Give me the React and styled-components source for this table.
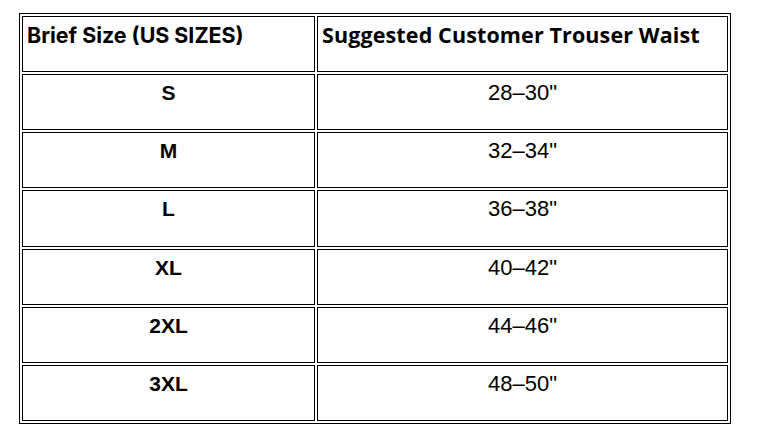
import styled, { createGlobalStyle } from "styled-components";

const GlobalStyle = createGlobalStyle`
  html, body {
    margin: 0;
    padding: 0;
    background: #ffffff;
  }
`;

const SizeTable = styled.table`
  margin: 13px 0 0 19px;
  width: 712px;
  border: 1px solid #000;
  border-collapse: separate;
  border-spacing: 2px;
  table-layout: fixed;
  color: #000;
`;

const Row = styled.tr`
  height: 56.14px;
`;

const HeadCell = styled.th`
  border: 1px solid #000;
  padding: 5px 4px 4px;
  vertical-align: top;
  text-align: left;
  font-family: ${(p) => (p.$alt ? '"Open Sans", "Liberation Sans", sans-serif' : 'Inter, "Liberation Sans", sans-serif')};
  font-weight: 700;
  font-size: ${(p) => (p.$alt ? "21.5px" : "21.4px")};
  letter-spacing: ${(p) => (p.$alt ? "0.12px" : "0")};
  line-height: 26px;
  white-space: nowrap;
`;

const Cell = styled.td`
  border: 1px solid #000;
  padding: 4px 4px;
  vertical-align: top;
  text-align: center;
  font-family: "Liberation Sans", Arial, sans-serif;
  font-weight: ${(p) => (p.$bold ? 700 : 400)};
  font-size: ${(p) => (p.$bold ? "21px" : "22px")};
  line-height: 28px;
`;

const sizes = [
  { size: "S", waist: "28–30\"" },
  { size: "M", waist: "32–34\"" },
  { size: "L", waist: "36–38\"" },
  { size: "XL", waist: "40–42\"" },
  { size: "2XL", waist: "44–46\"" },
  { size: "3XL", waist: "48–50\"" },
];

function App() {
  return (
    <>
      <GlobalStyle />
      <SizeTable>
        <colgroup>
          <col style={{ width: "293px" }} />
          <col style={{ width: "411px" }} />
        </colgroup>
        <thead>
          <Row>
            <HeadCell>Brief Size (US SIZES)</HeadCell>
            <HeadCell $alt>Suggested Customer Trouser Waist</HeadCell>
          </Row>
        </thead>
        <tbody>
          {sizes.map((s) => (
            <Row key={s.size}>
              <Cell $bold>{s.size}</Cell>
              <Cell>{s.waist}</Cell>
            </Row>
          ))}
        </tbody>
      </SizeTable>
    </>
  );
}

export default App;
